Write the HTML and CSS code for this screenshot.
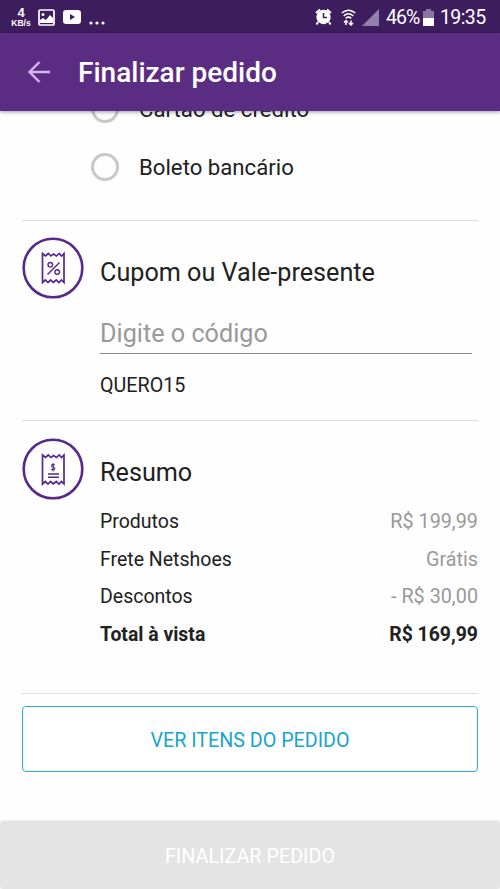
FILE: index.html
```html
<!DOCTYPE html>
<html lang="pt-BR">
<head>
<meta charset="utf-8">
<title>Finalizar pedido</title>
<link rel="stylesheet" href="styles.css">
</head>
<body>
<div class="status">
  <div class="speed"><b>4</b><span>KB/s</span></div>
  <svg class="s-image" width="17" height="17" viewBox="0 0 17 17"><rect x="1" y="1" width="15" height="15" rx="1" fill="none" stroke="#fff" stroke-width="1.7"/><circle cx="5" cy="5.5" r="1.5" fill="#fff"/><path d="M2 14V11L5 9L8 11L12 6L15 9V14Z" fill="#fff"/></svg>
  <svg class="s-video" width="18" height="14" viewBox="0 0 18 14"><rect width="18" height="14" rx="3" fill="#fff"/><path d="M7 4L12 7L7 10Z" fill="#3d1d5e"/></svg>
  <svg class="s-dots" width="16" height="4" viewBox="0 0 16 4" fill="#fff"><circle cx="2" cy="2" r="1.6"/><circle cx="8" cy="2" r="1.6"/><circle cx="14" cy="2" r="1.6"/></svg>
  <svg class="s-alarm" width="17" height="18" viewBox="0 0 17 18"><circle cx="8.5" cy="9" r="7.2" fill="#fff"/><path d="M1 5L5 1.5M16 5L12 1.5M3 14L1.5 16.5M14 14L15.500 16.500" stroke="#fff" stroke-width="2"/><path d="M8.500 5V9.500H12" fill="none" stroke="#3d1d5e" stroke-width="1.500"/></svg>
  <svg class="s-wifi" width="15" height="17" viewBox="0 0 15 17" fill="none" stroke="#fff" stroke-width="1.500"><path d="M.7 4Q7.500-1.500 14.300 4M2.700 6.800Q7.500 2.800 12.300 6.800M4.700 9.300Q7.500 7 10.300 9.300"/><path d="M5 16V12.500M3 13.500L5 11.500L7 13.500M10 11.500V15M8 14L10 16L12 14"/></svg>
  <svg class="s-signal" width="17" height="17" viewBox="0 0 17 17"><path d="M0 17L17 0V17Z" fill="#9380aa"/></svg>
  <span class="pct">46%</span>
  <svg class="s-battery" width="11" height="17" viewBox="0 0 11 17"><path d="M3 0H8V2H11V9H0V2H3Z" fill="#8b76a2"/><path d="M0 9H11V17H0Z" fill="#fff"/></svg>
  <span class="clock">19:35</span>
</div>
<header class="bar">
  <svg width="24" height="24" viewBox="0 0 24 24" fill="none" stroke="#d5b4f3" stroke-width="2.400"><path d="M23 12H2M12.500 2L2.500 12L12.500 22"/></svg>
  <h1>Finalizar pedido</h1>
</header>
<main>
  <section class="options">
    <label class="option"><i></i><span>Cartão de crédito</span></label>
    <label class="option"><i></i><span>Boleto bancário</span></label>
  </section>
  <section class="block coupon">
    <svg class="badge" width="62" height="62" viewBox="0 0 62 62" fill="none" stroke="#57298a"><circle cx="31" cy="31" r="29.300" stroke-width="2.600"/><path stroke-width="1.700" d="M20.500 16.500L23.500 19L26.300 16.500L29 19L31.500 17L34.500 19L37.200 16.500L39.500 19L42 16.500V45.500L39.500 43L37 45.500L34.300 43L31.300 45.500L28.500 43L26 45.500L23.300 43L20.500 45.500Z"/><path stroke-width="1.400" d="M25.500 37.500L37.500 25.500"/><circle cx="28.300" cy="27.800" r="2.300" stroke-width="1.400"/><circle cx="35.200" cy="35" r="2.300" stroke-width="1.400"/></svg>
    <div class="body">
      <h2>Cupom ou Vale-presente</h2>
      <div class="field">Digite o código</div>
      <p class="code">QUERO15</p>
    </div>
  </section>
  <section class="block summary">
    <svg class="badge" width="62" height="62" viewBox="0 0 62 62" fill="none" stroke="#57298a"><circle cx="31" cy="31" r="29.300" stroke-width="2.600"/><path stroke-width="1.700" d="M20.500 17L23.500 19.500L26.300 17L29 19.500L31.500 17.500L34.500 19.500L37.200 17L39.500 19.500L42 17V46L39.500 43.500L37 46L34.300 43.500L31.300 46L28.500 43.500L26 46L23.300 43.500L20.500 46Z"/><path stroke-width="1.100" d="M32.800 27.200Q31 25.700 29.800 26.800Q29 28.500 31.200 29.200Q33.500 30 32.600 31.300Q31.200 32.500 29.200 31M31.100 25V33.500"/><path stroke-width="1.500" d="M26 36H37M26 39.200H37"/></svg>
    <div class="body">
      <h2>Resumo</h2>
      <dl>
        <div><dt>Produtos</dt><dd>R$ 199,99</dd></div>
        <div><dt>Frete Netshoes</dt><dd>Grátis</dd></div>
        <div><dt>Descontos</dt><dd>- R$ 30,00</dd></div>
        <div class="total"><dt>Total à vista</dt><dd>R$ 169,99</dd></div>
      </dl>
    </div>
  </section>
  <section class="items"><button class="outline">VER ITENS DO PEDIDO</button></section>
</main>
<footer><button class="submit">FINALIZAR PEDIDO</button></footer>
</body>
</html>
```
FILE: styles.css
```css
* { box-sizing: border-box; }
body { margin: 0; width: 500px; height: 889px; display: flex; flex-direction: column; overflow: hidden; background: #fefefe; color: #212121; font-family: Roboto, sans-serif; }
h1, h2, p, dl, dd { margin: 0; font-weight: 400; }
svg { flex: none; display: block; }
button { font-family: inherit; padding: 0; }

.status { flex: none; height: 33px; display: flex; align-items: center; padding: 1px 14px 0 11px; background: #3d1d5e; color: #fff; }
.speed { width: 20px; display: flex; flex-direction: column; align-items: center; font-family: "Liberation Sans", sans-serif; font-weight: 700; }
.speed b { font-size: 13px; line-height: 13px; }
.speed span { font-size: 8.500px; line-height: 9px; }
.s-image { margin-left: 7px; }
.s-video { margin-left: 8px; }
.s-dots { margin: 12px 0 0 8px; }
.s-alarm { margin-left: auto; }
.s-wifi { margin-left: 9px; }
.s-signal { margin: 0 7px 0 6px; }
.pct, .clock { font-size: 19.500px; line-height: 24px; padding-top: 2px; }
.pct { width: 33px; letter-spacing: -.9px; }
.s-battery { margin: 0 6px 0 4px; }
.clock { width: 46px; letter-spacing: -.6px; }

.bar { flex: none; height: 78px; display: flex; align-items: center; gap: 27px; padding-left: 27px; background: #5b2d82; box-shadow: 0 1px 4px rgba(0,0,0,.4); z-index: 1; }
.bar h1 { color: #fff; font-size: 28px; font-weight: 500; line-height: 34px; padding-top: 2px; }

main { flex: 1; min-height: 0; overflow: hidden; padding: 0 22px; }
.options { margin-top: -31px; height: 140px; }
.option { display: flex; align-items: center; height: 58px; padding-left: 69px; gap: 20px; font-size: 22.200px; }
.option i { width: 28px; height: 28px; border: 3px solid #c8c8c8; border-radius: 50%; }

.block { display: flex; gap: 16px; border-top: 1px solid #dedede; }
.block .body { flex: 1; }
.badge { margin-top: 16px; }
.summary .badge { margin-top: 17px; }
h2 { font-size: 25.200px; line-height: 30px; margin-top: 37px; }
.coupon { height: 200px; }
.summary { height: 273px; }
.field { width: 372px; height: 43px; margin-top: 23px; padding-top: 8px; border-bottom: 1px solid #888; color: #999; font-size: 25.200px; line-height: 30px; }
.code { margin-top: 20px; font-size: 19.700px; line-height: 24px; }
dl { margin-top: 15px; font-size: 19.500px; }
dl div { display: flex; justify-content: space-between; height: 37.500px; line-height: 37.500px; }
dd { color: #999; font-size: 19.800px; }
.total dt, .total dd { color: #212121; font-weight: 700; }
.total dt, .total dd { font-size: 19.400px; }

.items { border-top: 1px solid #dedede; padding-top: 12px; }
.outline { display: block; width: 100%; height: 66px; padding-top: 2px; border: 1.500px solid #2aaed4; border-radius: 4px; background: #fff; color: #14a5d0; font-size: 19.700px; }
footer { flex: none; height: 68px; background: #fefefe; }
.submit { width: 100%; height: 100%; border: 0; border-radius: 4px; background: #e4e4e4; color: #fff; font-size: 19.800px; padding-top: 3px; box-shadow: 0 0 3px rgba(0,0,0,.15); }
```
